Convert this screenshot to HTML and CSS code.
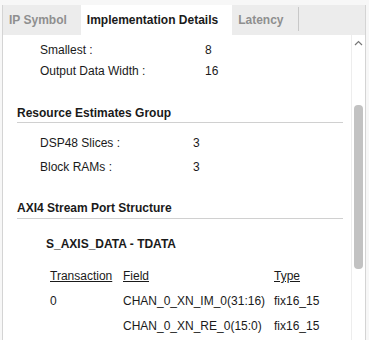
FILE: index.html
```html
<!DOCTYPE html>
<html lang="en">
  <head>
    <meta charset="UTF-8" />
    <title>Implementation Details</title>
    <link rel="stylesheet" href="styles.css">
  </head>
  <body>
    <div class="window">
      <div class="tabs">
        <div class="tab">IP Symbol</div>
        <div class="tab active">Implementation Details</div>
        <div class="tab last">Latency</div>
      </div>

      <div class="body">
        <div class="content">
          <div class="row first">
            <span class="label wide">Smallest :</span>
            <span>8</span>
          </div>
          <div class="row">
            <span class="label wide">Output Data Width :</span>
            <span>16</span>
          </div>

          <div class="group">Resource Estimates Group</div>
          <div class="row first">
            <span class="label">DSP48 Slices :</span>
            <span>3</span>
          </div>
          <div class="row tall">
            <span class="label">Block RAMs :</span>
            <span>3</span>
          </div>

          <div class="group">AXI4 Stream Port Structure</div>
          <div class="port">S_AXIS_DATA - TDATA</div>

          <div class="trow head">
            <span class="c1"><u>Transaction</u></span>
            <span class="c2"><u>Field</u></span>
            <span><u>Type</u></span>
          </div>
          <div class="trow">
            <span class="c1">0</span>
            <span class="c2">CHAN_0_XN_IM_0(31:16)</span>
            <span>fix16_15</span>
          </div>
          <div class="trow">
            <span class="c1"></span>
            <span class="c2">CHAN_0_XN_RE_0(15:0)</span>
            <span>fix16_15</span>
          </div>
        </div>

        <div class="scrollbar">
          <svg class="arrow" width="9" height="6" viewBox="0 0 9 6">
            <path d="M1 5 L4.5 1.5 L8 5" fill="none" stroke="#777" stroke-width="1.2" />
          </svg>
          <div class="thumb"></div>
        </div>
      </div>
    </div>
  </body>
</html>
```

FILE: styles.css
```css
body {
  margin: 0;
  background-color: #f7f7f7;
  font-family: "Liberation Sans", Arial, sans-serif;
  font-size: 12px;
  line-height: 14px;
  color: #1a1a1a;
}

.window {
  margin: 5px 3px 0 2px;
  height: 335px;
  border-left: 1px solid #d4d4d4;
  border-right: 1px solid #d4d4d4;
  background-color: #fff;
  display: flex;
  flex-direction: column;
  overflow: hidden;
}

.tabs {
  display: flex;
  height: 30px;
  flex-shrink: 0;
  background-color: #ececec;
}

.tab {
  padding: 0 14px 0 6px;
  line-height: 30px;
  font-weight: bold;
  color: #8f8f8f;
}

.tab.active {
  background-color: #fff;
  color: #1a1a1a;
}

.tab.last {
  height: 24px;
  margin-top: 2px;
  line-height: 26px;
  border-right: 1px solid #c8c8c8;
}

.body {
  flex: 1;
  display: flex;
  min-height: 0;
}

.content {
  flex: 1;
  padding: 8px 8px 0 14px;
  overflow: hidden;
}

.row {
  display: flex;
  padding-left: 23px;
  margin-top: 7px;
}

.row.first {
  margin-top: 0;
}

.row.tall {
  margin-top: 10px;
}

.label {
  width: 153px;
}

.label.wide {
  width: 165px;
}

.group {
  margin-top: 28px;
  margin-bottom: 13px;
  padding-bottom: 2px;
  border-bottom: 1px solid #d0d0d0;
  font-weight: bold;
}

.row.tall + .group {
  margin-top: 27px;
  padding-bottom: 3px;
  margin-bottom: 18px;
}

.port {
  padding-left: 29px;
  font-weight: bold;
}

.trow {
  display: flex;
  padding-left: 33px;
  margin-top: 11px;
  white-space: nowrap;
}

.trow.head {
  margin-top: 18px;
  margin-bottom: 1px;
}

.c1 {
  width: 73px;
}

.c2 {
  width: 151px;
}

.scrollbar {
  width: 13px;
  flex-shrink: 0;
  border-left: 1px solid #ededed;
  display: flex;
  flex-direction: column;
  align-items: center;
}

.arrow {
  margin-top: 5px;
}

.thumb {
  margin-top: 59px;
  width: 9px;
  height: 164px;
  border-radius: 4px;
  background-color: #c2c2c2;
}
```
